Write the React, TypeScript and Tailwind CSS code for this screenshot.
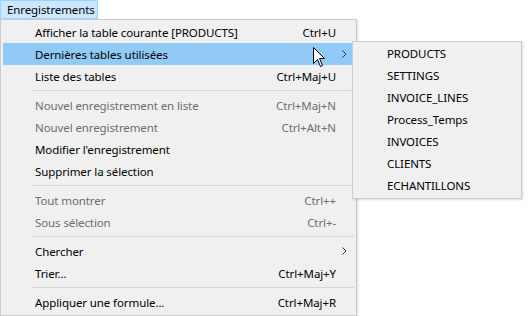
import React from "react";

type Item =
  | { type: "sep" }
  | { type: "item"; label: string; shortcut?: string; disabled?: boolean; sub?: boolean; active?: boolean };

const items: Item[] = [
  { type: "item", label: "Afficher la table courante [PRODUCTS]", shortcut: "Ctrl+U" },
  { type: "item", label: "Dernières tables utilisées", sub: true, active: true },
  { type: "item", label: "Liste des tables", shortcut: "Ctrl+Maj+U" },
  { type: "sep" },
  { type: "item", label: "Nouvel enregistrement en liste", shortcut: "Ctrl+Maj+N", disabled: true },
  { type: "item", label: "Nouvel enregistrement", shortcut: "Ctrl+Alt+N", disabled: true },
  { type: "item", label: "Modifier l'enregistrement" },
  { type: "item", label: "Supprimer la sélection" },
  { type: "sep" },
  { type: "item", label: "Tout montrer", shortcut: "Ctrl++", disabled: true },
  { type: "item", label: "Sous sélection", shortcut: "Ctrl+-", disabled: true },
  { type: "sep" },
  { type: "item", label: "Chercher", sub: true },
  { type: "item", label: "Trier...", shortcut: "Ctrl+Maj+Y" },
  { type: "sep" },
  { type: "item", label: "Appliquer une formule...", shortcut: "Ctrl+Maj+R" },
];

const subItems = ["PRODUCTS", "SETTINGS", "INVOICE_LINES", "Process_Temps", "INVOICES", "CLIENTS", "ECHANTILLONS"];

function Arrow() {
  return (
    <svg width="5" height="8" viewBox="0 0 5 8" className="block">
      <path d="M0.5 0.5 L4 4 L0.5 7.5" fill="none" stroke="#333" strokeWidth="1" />
    </svg>
  );
}

export default function App() {
  return (
    <div
      className="relative w-[528px] h-[316px] bg-white overflow-hidden text-[11.5px] tracking-[-0.1px] leading-none text-black"
      style={{ fontFamily: '"Noto Sans", "Open Sans", sans-serif' }}
    >
      <div className="flex h-[19px]">
        <div className="h-[19px] w-[98px] bg-[#cce8ff] border border-[#99d1ff] flex items-center pl-[6px] pt-[1px]">
          Enregistrements
        </div>
      </div>
      <div className="w-[357px] h-[297px] bg-[#f0f0f0] border border-[#cccccc] px-[2px] py-[1px] shadow-[1px_1px_2px_rgba(0,0,0,0.15)]">
        {items.map((it, i) =>
          it.type === "sep" ? (
            <div key={i} className="h-[7px] flex items-center pl-[28px]">
              <div className="h-px w-full bg-[#d7d7d7]" />
            </div>
          ) : (
            <div
              key={i}
              className={`h-[22px] flex items-center pl-[32px] ${it.active ? "bg-[#91c9f7]" : ""} ${
                it.disabled ? "text-[#6d6d6d]" : "text-black"
              }`}
            >
              <span className="flex-1 whitespace-nowrap pt-[1px]">{it.label}</span>
              {it.shortcut && <span className="whitespace-nowrap pt-[1px]">{it.shortcut}</span>}
              <span className="w-[18px] flex justify-start pl-[6px]">{it.sub && <Arrow />}</span>
            </div>
          )
        )}
      </div>

      <div className="absolute left-[352px] top-[41px] w-[170px] bg-[#f0f0f0] border border-[#cccccc] py-[1px] shadow-[1px_1px_2px_rgba(0,0,0,0.15)]">
        {subItems.map((s) => (
          <div key={s} className="h-[22px] flex items-center pl-[34px] whitespace-nowrap">
            {s}
          </div>
        ))}
      </div>

      <svg
        className="absolute left-[313px] top-[47px]"
        width="13"
        height="21"
        viewBox="0 0 13 21"
      >
        <path
          d="M0.5 0.5 L0.5 16.5 L4.5 12.5 L7.5 19.5 L9.5 18.5 L6.5 11.5 L11.5 11.5 Z"
          fill="white"
          stroke="black"
          strokeWidth="1"
          strokeLinejoin="miter"
        />
      </svg>
    </div>
  );
}
